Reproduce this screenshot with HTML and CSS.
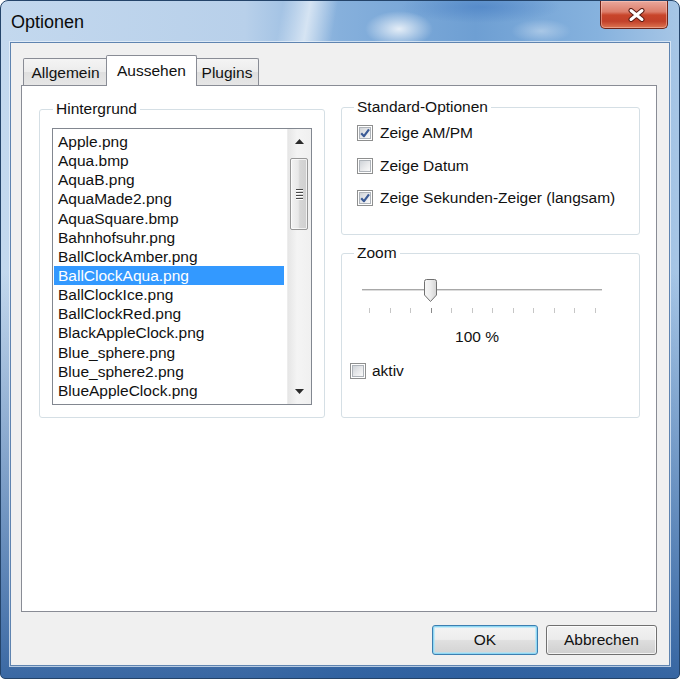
FILE: index.html
```html
<!DOCTYPE html>
<html>
<head>
<meta charset="utf-8">
<title>Optionen</title>
<link rel="stylesheet" href="styles.css">
</head>
<body>
<div class="window">
  <div class="titlebar">
    <span class="title">Optionen</span>
    <div class="close">
      <svg width="19" height="14" viewBox="0 0 19 14">
        <path d="M4 2.5 L15 11.5 M15 2.5 L4 11.5" stroke="#5a1a12" stroke-width="5" stroke-linecap="round"/>
        <path d="M4 2.5 L15 11.5 M15 2.5 L4 11.5" stroke="#ffffff" stroke-width="3" stroke-linecap="round"/>
      </svg>
    </div>
  </div>
  <div class="client">
    <div class="tabs">
      <div class="tab tab-1">Allgemein</div>
      <div class="tab tab-2 active">Aussehen</div>
      <div class="tab tab-3">Plugins</div>
    </div>
    <div class="panel">
      <fieldset class="group group-bg">
        <legend>Hintergrund</legend>
        <div class="listbox">
          <ul class="items">
            <li>Apple.png</li>
            <li>Aqua.bmp</li>
            <li>AquaB.png</li>
            <li>AquaMade2.png</li>
            <li>AquaSquare.bmp</li>
            <li>Bahnhofsuhr.png</li>
            <li>BallClockAmber.png</li>
            <li class="selected">BallClockAqua.png</li>
            <li>BallClockIce.png</li>
            <li>BallClockRed.png</li>
            <li>BlackAppleClock.png</li>
            <li>Blue_sphere.png</li>
            <li>Blue_sphere2.png</li>
            <li>BlueAppleClock.png</li>
          </ul>
          <div class="scrollbar">
            <div class="sb-btn">
              <svg width="9" height="5" viewBox="0 0 9 5"><path d="M0 5 L4.5 0 L9 5 Z" fill="#2b2b2b"/></svg>
            </div>
            <div class="sb-thumb">
              <span class="grip"></span><span class="grip"></span><span class="grip"></span><span class="grip"></span>
            </div>
            <div class="sb-track"></div>
            <div class="sb-btn">
              <svg width="9" height="5" viewBox="0 0 9 5"><path d="M0 0 L9 0 L4.5 5 Z" fill="#2b2b2b"/></svg>
            </div>
          </div>
        </div>
      </fieldset>
      <div class="rightcol">
        <fieldset class="group group-std">
          <legend>Standard-Optionen</legend>
          <div class="cb-list">
            <label class="cbrow">
              <span class="cb"><span class="cb-in"><svg viewBox="0 0 12 12"><path d="M2.2 6.2 L5 9.2 L10 2.4" fill="none" stroke="#3b5b96" stroke-width="2.2" stroke-linejoin="round"/></svg></span></span>
              <span>Zeige AM/PM</span>
            </label>
            <label class="cbrow">
              <span class="cb"><span class="cb-in"></span></span>
              <span>Zeige Datum</span>
            </label>
            <label class="cbrow">
              <span class="cb"><span class="cb-in"><svg viewBox="0 0 12 12"><path d="M2.2 6.2 L5 9.2 L10 2.4" fill="none" stroke="#3b5b96" stroke-width="2.2" stroke-linejoin="round"/></svg></span></span>
              <span>Zeige Sekunden-Zeiger (langsam)</span>
            </label>
          </div>
        </fieldset>
        <fieldset class="group group-zoom">
          <legend>Zoom</legend>
          <div class="slider">
            <div class="track"></div>
            <svg class="thumb" width="15" height="25" viewBox="0 0 15 25">
              <defs>
                <linearGradient id="tg" x1="0" y1="0" x2="1" y2="0">
                  <stop offset="0" stop-color="#f7f7f7"/>
                  <stop offset="0.5" stop-color="#ececec"/>
                  <stop offset="1" stop-color="#d4d4d4"/>
                </linearGradient>
              </defs>
              <path d="M1.5 3.5 Q1.5 1.5 3.5 1.5 H11.5 Q13.5 1.5 13.5 3.5 V17 L7.5 23.5 L1.5 17 Z" fill="url(#tg)" stroke="#707070" stroke-width="1"/>
            </svg>
          </div>
          <div class="ticks">
            <span></span><span></span><span></span><span class="cur"></span><span></span><span></span>
            <span></span><span></span><span></span><span></span><span></span><span></span>
          </div>
          <div class="value">100 %</div>
          <label class="cbrow aktiv">
            <span class="cb"><span class="cb-in"></span></span>
            <span>aktiv</span>
          </label>
        </fieldset>
      </div>
    </div>
    <div class="buttons">
      <button class="btn ok">OK</button>
      <button class="btn cancel">Abbrechen</button>
    </div>
  </div>
</div>
</body>
</html>
```

FILE: styles.css
```css
* { box-sizing: border-box; }

html, body {
  margin: 0;
  padding: 0;
}

body {
  width: 680px;
  height: 679px;
  overflow: hidden;
  font-family: "Liberation Sans", Arial, sans-serif;
  font-size: 15.5px;
  color: #111;
  background: #ffffff;
}

.window {
  width: 680px;
  height: 679px;
  border: 1px solid #24446a;
  border-radius: 8px 8px 5px 5px;
  padding: 0 9px 12px 9px;
  display: flex;
  flex-direction: column;
  background-image:
    radial-gradient(ellipse 34px 18px at 398px 28px, rgba(255,255,255,0.8), rgba(255,255,255,0)),
    radial-gradient(ellipse 30px 12px at 540px 30px, rgba(255,255,255,0.35), rgba(255,255,255,0)),
    radial-gradient(ellipse 80px 16px at 480px 6px, rgba(70,125,195,0.6), rgba(70,125,195,0)),
    linear-gradient(100deg, rgba(255,255,255,0) 0 41%, rgba(255,255,255,0.6) 45%, rgba(255,255,255,0) 49%),
    linear-gradient(to bottom, rgba(35,85,150,0) 0%, rgba(35,85,150,0) 40%, rgba(35,85,150,0.85) 100%),
    linear-gradient(to right, #c3d8ee 0%, #b8d0ea 36%, #86b0dc 50%, #6e9fd3 70%, #86b2de 88%, #a7c6e6 100%);
  background-repeat: no-repeat;
  background-size: 100% 60px, 100% 60px, 100% 60px, 100% 60px, 100% 100%, 100% 100%;
}

.titlebar {
  height: 41px;
  margin: 0 -9px;
  padding: 0 11px 0 10px;
  display: flex;
  justify-content: space-between;
  align-items: flex-start;
  flex: none;
}

.title {
  margin-top: 10px;
  font-size: 18px;
  line-height: 22px;
  color: #0b0b0b;
}

.close {
  width: 68px;
  height: 28px;
  border: 1px solid #6e2419;
  border-top: none;
  border-radius: 0 0 5px 5px;
  background: linear-gradient(to bottom, #e9a89c 0%, #dc7e6b 40%, #c8452b 52%, #c2412a 75%, #dd7552 100%);
  box-shadow: inset 0 0 0 1px rgba(255,210,200,0.45);
  display: flex;
  align-items: center;
  justify-content: center;
}

.close svg { display: block; margin-left: 4px; }

.client {
  flex: 1;
  border: 1px solid #5f84b0;
  box-shadow: 0 0 0 1px rgba(235,244,252,0.7);
  background: #f0f0f0;
  padding: 12px 12px 10px 10px;
  display: flex;
  flex-direction: column;
}

.tabs {
  height: 30px;
  display: flex;
  align-items: flex-end;
  padding-left: 2px;
  flex: none;
}

.tab {
  height: 27px;
  border: 1px solid #898c95;
  border-bottom: none;
  border-radius: 2px 2px 0 0;
  background: linear-gradient(to bottom, #f4f4f4 0%, #ececec 48%, #dfdfdf 52%, #e6e6e6 100%);
  line-height: 27px;
  text-align: center;
  white-space: nowrap;
}

.tab-1 { width: 85px; }
.tab-2 { width: 91px; margin: 0 -2px -1px -2px; }
.tab-3 { width: 64px; }

.tab.active {
  height: 31px;
  line-height: 29px;
  background: #ffffff;
  position: relative;
  z-index: 1;
}

.panel {
  height: 527px;
  flex: none;
  border: 1px solid #898c95;
  background: #ffffff;
  display: flex;
  align-items: flex-start;
  gap: 16px;
  padding: 15px 16px 0 17px;
}

.group {
  margin: 0;
  border: 1px solid #d5dfe5;
  border-radius: 3px;
  min-width: 0;
}

.group legend {
  padding: 0 3px;
  line-height: 16px;
}

.group-bg {
  width: 286px;
  height: 317px;
  padding: 11px 12px 12px 12px;
}

.group-bg legend { margin-left: 1px; }

.listbox {
  height: 277px;
  border: 1px solid #828790;
  background: #ffffff;
  display: flex;
}

.items {
  list-style: none;
  margin: 0;
  padding: 3px 0 0 0;
  flex: 1;
  overflow: hidden;
}

.items li {
  height: 19.15px;
  line-height: 19.15px;
  padding-left: 4px;
  margin: 0 3px 0 1px;
  white-space: nowrap;
}

.items li.selected {
  background: #3399ff;
  color: #ffffff;
}

.scrollbar {
  width: 24px;
  display: flex;
  flex-direction: column;
  background: linear-gradient(to right, #e6e6e6, #f4f4f4 40%, #f0f0f0);
  border-left: 1px solid #ededed;
}

.sb-btn {
  height: 25px;
  display: flex;
  align-items: center;
  justify-content: center;
}

.sb-btn svg { display: block; }

.sb-thumb {
  margin: 4px 3px 0 2px;
  height: 72px;
  border: 1px solid #979797;
  border-radius: 2px;
  background: linear-gradient(to right, #f3f3f3 0%, #e8e8e8 45%, #d6d6d6 55%, #cfcfcf 100%);
  box-shadow: inset 0 0 0 1px rgba(255,255,255,0.7);
  display: flex;
  flex-direction: column;
  align-items: center;
  justify-content: center;
  gap: 2px;
}

.grip {
  display: block;
  width: 7px;
  height: 1px;
  background: #4a4a4a;
  box-shadow: 0 1px 0 #ffffff;
}

.sb-track { flex: 1; }

.rightcol {
  display: flex;
  flex-direction: column;
  gap: 10px;
  margin-top: -2px;
}

.group-std {
  width: 299px;
  height: 136px;
  padding: 8px 12px 0 12px;
}

.cb-list {
  display: flex;
  flex-direction: column;
  gap: 12.5px;
  margin-left: 3px;
}

.cbrow {
  display: flex;
  align-items: center;
  height: 20px;
  gap: 7px;
  white-space: nowrap;
}

.cb {
  width: 16px;
  height: 16px;
  border: 1px solid #8e8f8f;
  background: #ffffff;
  padding: 1px;
  flex: none;
}

.cb-in {
  display: block;
  width: 12px;
  height: 12px;
  border: 1px solid #aeb3b9;
  background: linear-gradient(135deg, #cfd3d8 0%, #e9eaec 55%, #fafafa 100%);
}

.cb-in svg {
  display: block;
  width: 12px;
  height: 12px;
  margin: -1px;
  overflow: visible;
}

.group-zoom {
  width: 299px;
  height: 173px;
  padding: 17px 12px 0 8px;
}

.group-zoom legend { margin-left: 4px; }

.slider {
  position: relative;
  margin-left: 12px;
  width: 240px;
  height: 24px;
  display: flex;
  align-items: center;
}

.track {
  width: 100%;
  height: 3px;
  border-top: 1px solid #a8a8a8;
  border-bottom: 1px solid #ffffff;
  background: #dcdcdc;
}

.thumb {
  position: absolute;
  left: 61px;
  top: 0;
  display: block;
}

.ticks {
  margin: 6px 0 0 19px;
  width: 227px;
  height: 5px;
  display: flex;
  justify-content: space-between;
}

.ticks span {
  width: 1px;
  height: 5px;
  background: #c6c6c6;
}

.ticks span.cur { background: #8a8a8a; }

.value {
  margin: 16px 0 0 12px;
  width: 230px;
  line-height: 16px;
  text-align: center;
}

.aktiv {
  margin-top: 16px;
  gap: 6px;
}

.buttons {
  display: flex;
  justify-content: flex-end;
  gap: 8px;
  margin-top: 13px;
  flex: none;
}

.btn {
  height: 30px;
  padding: 0;
  font-family: "Liberation Sans", Arial, sans-serif;
  font-size: 15.5px;
  color: #111;
  border: 1px solid #707070;
  border-radius: 3px;
  background: linear-gradient(to bottom, #f2f2f2 0%, #ebebeb 48%, #dddddd 52%, #cfcfcf 100%);
  box-shadow: inset 0 0 0 1px rgba(255,255,255,0.75);
}

.ok {
  width: 106px;
  border-color: #3c7fb1;
  background: linear-gradient(to bottom, #f4f4f4 0%, #ededed 48%, #e0e0e0 52%, #d3d3d3 100%);
  box-shadow: inset 0 0 0 1px #8fd7f3, inset 0 0 0 2px rgba(170,228,250,0.6);
}

.cancel { width: 111px; }
```
